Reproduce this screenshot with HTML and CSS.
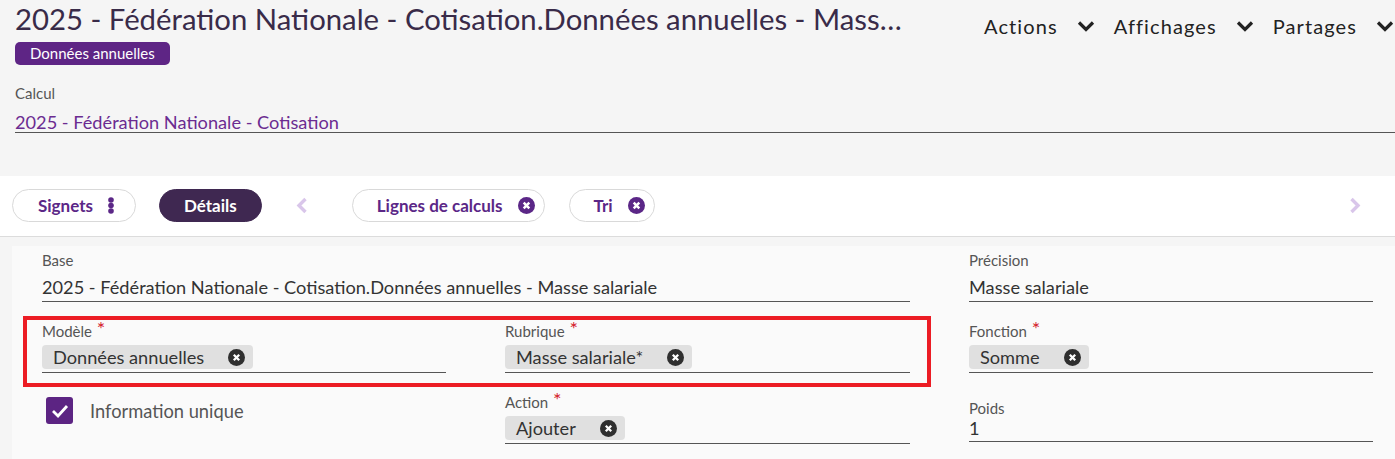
FILE: index.html
```html
<!DOCTYPE html>
<html lang="fr">
<head>
<meta charset="utf-8">
<title>Calcul</title>
<link rel="stylesheet" href="styles.css">
</head>
<body>
<header class="top">
  <div class="title-row">
    <div class="title-block">
      <h1 class="title">2025 - Fédération Nationale - Cotisation.Données annuelles - Masse salariale</h1>
      <span class="badge">Données annuelles</span>
    </div>
    <nav class="menu">
      <span class="menu-item">Actions
        <svg class="caret" width="18" height="12" viewBox="0 0 18 12"><path d="M2 2.5 L9 9.5 L16 2.5" fill="none" stroke="#222" stroke-width="3.2"/></svg></span>
      <span class="menu-item">Affichages
        <svg class="caret" width="18" height="12" viewBox="0 0 18 12"><path d="M2 2.5 L9 9.5 L16 2.5" fill="none" stroke="#222" stroke-width="3.2"/></svg></span>
      <span class="menu-item">Partages
        <svg class="caret" width="18" height="12" viewBox="0 0 18 12"><path d="M2 2.5 L9 9.5 L16 2.5" fill="none" stroke="#222" stroke-width="3.2"/></svg></span>
    </nav>
  </div>
  <div class="calc-field">
    <div class="label">Calcul</div>
    <a class="calc-link" href="#">2025 - Fédération Nationale - Cotisation</a>
  </div>
</header>

<div class="bar">
  <button class="pill">Signets
    <svg width="6" height="17" viewBox="0 0 6 17"><circle cx="3" cy="3" r="2.8" fill="#5b2787"/><circle cx="3" cy="8.5" r="2.8" fill="#5b2787"/><circle cx="3" cy="14" r="2.8" fill="#5b2787"/></svg>
  </button>
  <button class="pill pill-dark">Détails</button>
  <svg class="nav-chev prev" width="12" height="17" viewBox="0 0 12 17"><path d="M9.5 2 L3 8.5 L9.5 15" fill="none" stroke="#d9c6ea" stroke-width="3.4"/></svg>
  <button class="pill pill-tag">Lignes de calculs
    <svg width="17" height="17" viewBox="0 0 17 17"><circle cx="8.5" cy="8.5" r="8.5" fill="#5b2787"/><path d="M5.7 5.7 L11.3 11.3 M11.3 5.7 L5.7 11.3" stroke="#fff" stroke-width="2.5"/></svg>
  </button>
  <button class="pill pill-tag">Tri
    <svg width="17" height="17" viewBox="0 0 17 17"><circle cx="8.5" cy="8.5" r="8.5" fill="#5b2787"/><path d="M5.7 5.7 L11.3 11.3 M11.3 5.7 L5.7 11.3" stroke="#fff" stroke-width="2.5"/></svg>
  </button>
  <svg class="nav-chev next" width="12" height="17" viewBox="0 0 12 17"><path d="M2.5 2 L9 8.5 L2.5 15" fill="none" stroke="#d9c6ea" stroke-width="3.4"/></svg>
</div>

<main class="panel">
  <div class="form">
    <div class="field span2">
      <div class="label">Base</div>
      <div class="value">2025 - Fédération Nationale - Cotisation.Données annuelles - Masse salariale</div>
    </div>
    <div class="field">
      <div class="label">Précision</div>
      <div class="value">Masse salariale</div>
    </div>

    <div class="field chip-field">
      <div class="label">Modèle <span class="req">*</span></div>
      <div class="chips"><span class="chip">Données annuelles<svg width="17" height="17" viewBox="0 0 17 17"><circle cx="8.5" cy="8.5" r="8.5" fill="#2f2f2f"/><path d="M5.8 5.8 L11.2 11.2 M11.2 5.8 L5.8 11.2" stroke="#fff" stroke-width="2.3"/></svg></span></div>
    </div>
    <div class="field chip-field">
      <div class="label">Rubrique <span class="req">*</span></div>
      <div class="chips"><span class="chip">Masse salariale*<svg width="17" height="17" viewBox="0 0 17 17"><circle cx="8.5" cy="8.5" r="8.5" fill="#2f2f2f"/><path d="M5.8 5.8 L11.2 11.2 M11.2 5.8 L5.8 11.2" stroke="#fff" stroke-width="2.3"/></svg></span></div>
    </div>
    <div class="field chip-field">
      <div class="label">Fonction <span class="req">*</span></div>
      <div class="chips"><span class="chip">Somme<svg width="17" height="17" viewBox="0 0 17 17"><circle cx="8.5" cy="8.5" r="8.5" fill="#2f2f2f"/><path d="M5.8 5.8 L11.2 11.2 M11.2 5.8 L5.8 11.2" stroke="#fff" stroke-width="2.3"/></svg></span></div>
    </div>

    <label class="check">
      <span class="box"><svg width="18" height="14" viewBox="0 0 18 14"><path d="M2 7 L7 12 L16 2" fill="none" stroke="#fff" stroke-width="2.8"/></svg></span>
      <span class="check-text">Information unique</span>
    </label>
    <div class="field chip-field">
      <div class="label">Action <span class="req">*</span></div>
      <div class="chips"><span class="chip">Ajouter<svg width="17" height="17" viewBox="0 0 17 17"><circle cx="8.5" cy="8.5" r="8.5" fill="#2f2f2f"/><path d="M5.8 5.8 L11.2 11.2 M11.2 5.8 L5.8 11.2" stroke="#fff" stroke-width="2.3"/></svg></span></div>
    </div>
    <div class="field poids">
      <div class="label">Poids</div>
      <div class="value">1</div>
    </div>
  </div>
  <div class="highlight"></div>
</main>
</body>
</html>
```

FILE: styles.css
```css
* { box-sizing: border-box; }

body {
  margin: 0;
  background: #f5f5f5;
  font-family: Lato, "Open Sans", sans-serif;
  color: #333;
  overflow: hidden;
}

.top {
  height: 176px;
  padding: 2px 0 0 15px;
}

.title-row {
  display: flex;
  align-items: flex-start;
}

.title-block {
  flex: 0 0 892px;
  min-width: 0;
}

.title {
  margin: 0;
  font-size: 29.3px;
  font-weight: 400;
  line-height: 34px;
  color: #392b49;
  white-space: nowrap;
  overflow: hidden;
  text-overflow: ellipsis;
}

.badge {
  display: inline-block;
  margin-top: 6px;
  height: 23px;
  padding: 0 15px;
  border-radius: 5px;
  background: #5e2585;
  color: #fff;
  font-size: 15px;
  line-height: 23px;
}

.menu {
  margin-left: auto;
  margin-top: 12px;
  display: flex;
  gap: 19px;
  margin-right: 1px;
}

.menu-item {
  display: flex;
  align-items: center;
  gap: 19px;
  font-size: 20px;
  line-height: 24px;
  letter-spacing: 1.1px;
  color: #222;
}

.caret { display: block; }

.calc-field {
  margin-top: 19px;
  border-bottom: 1px solid #555;
}

.label {
  font-size: 15px;
  line-height: 18px;
  color: #555;
}

.calc-link {
  display: block;
  margin-top: 10px;
  font-size: 18.2px;
  line-height: 20px;
  color: #6b2c91;
  text-decoration: none;
}

.bar {
  height: 61px;
  background: #fff;
  border-bottom: 1px solid #dcdcdc;
  display: flex;
  align-items: flex-start;
  padding: 13px 34px 0 12px;
}

.pill {
  height: 33px;
  border: 1px solid #d9d9d9;
  border-radius: 17px;
  background: #fff;
  display: flex;
  align-items: center;
  gap: 15px;
  padding: 0 21px 0 25px;
  font-family: Lato, "Open Sans", sans-serif;
  font-size: 17px;
  font-weight: 700;
  color: #5b2787;
  cursor: pointer;
}

.pill svg { display: block; }

.pill-dark {
  margin-left: 23px;
  background: #3f2851;
  border-color: #3f2851;
  color: #fff;
  padding: 0 24px;
}

.pill-tag {
  padding: 0 9px 0 24px;
}

.pill-tag + .pill-tag { margin-left: 24px; }

.nav-chev {
  display: block;
  margin-top: 8px;
}

.nav-chev.prev { margin: 8px 44px 0 34px; }
.nav-chev.next { margin-left: auto; }

.panel {
  position: relative;
  margin: 9px 0 0 12px;
  background: #fafafa;
  padding: 5px 22px 20px 30px;
}

.form {
  display: grid;
  grid-template-columns: 404px 405px 404px;
  column-gap: 59px;
  row-gap: 20px;
}

.field {
  border-bottom: 1px solid #555;
}

.span2 { grid-column: 1 / 3; }

.value {
  margin-top: 7px;
  padding-bottom: 3px;
  font-size: 18.2px;
  line-height: 22px;
  color: #333;
}

.req {
  color: #d4202a;
  font-size: 20px;
  position: relative;
  top: -1px;
  margin-left: 1px;
}

.label .req { line-height: 0; }

.chips {
  margin-top: 5px;
  padding-bottom: 3px;
  display: flex;
}

.chip {
  height: 24px;
  display: inline-flex;
  align-items: center;
  gap: 24px;
  padding: 0 8px 0 11px;
  background: #e0e0e0;
  border-radius: 4px;
  font-size: 18.2px;
  line-height: 24px;
  color: #333;
}

.chip svg { display: block; }

.check {
  display: flex;
  align-items: center;
  gap: 17px;
  margin: 4px 0 0 4px;
  align-self: start;
}

.box {
  width: 27px;
  height: 27px;
  border-radius: 3px;
  background: #5c2483;
  display: flex;
  align-items: center;
  justify-content: center;
}

.box svg { display: block; }

.check-text {
  font-size: 18.3px;
  color: #555;
}

.poids {
  align-self: end;
  margin-bottom: 2px;
}

.poids .value {
  margin-top: 0;
  padding-bottom: 2px;
}

.highlight {
  position: absolute;
  left: 11px;
  top: 70px;
  width: 908px;
  height: 71px;
  border: 4px solid #ec1c24;
  pointer-events: none;
}
```
